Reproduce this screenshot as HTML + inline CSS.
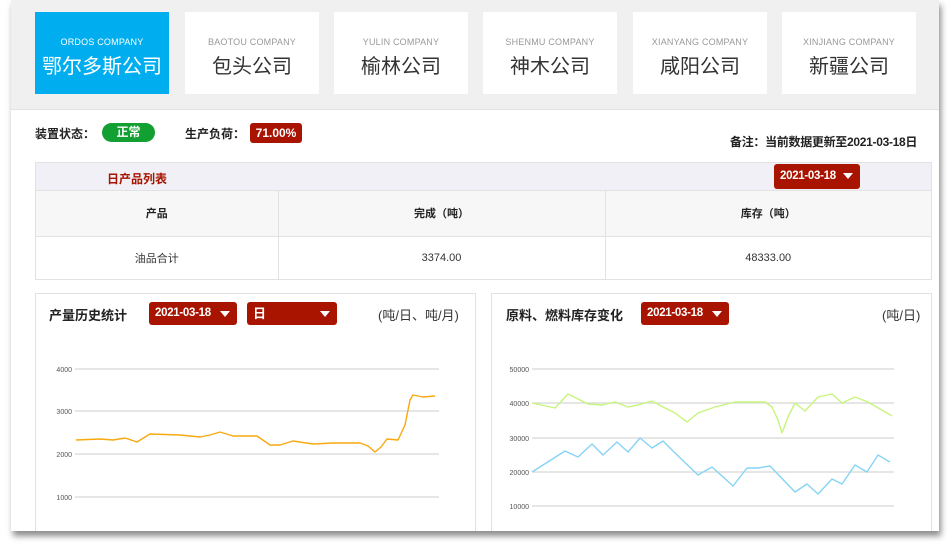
<!DOCTYPE html>
<html><head><meta charset="utf-8"><style>
*{margin:0;padding:0;box-sizing:border-box}
body{width:950px;height:551px;background:#fff;font-family:"Liberation Sans","Noto Sans CJK SC",sans-serif;position:relative;overflow:hidden}
.frame{position:absolute;left:11px;top:0;width:928px;height:531px;background:#fff;box-shadow:2px 5px 6px rgba(0,0,0,.45);overflow:hidden}
.hdr{position:absolute;left:0;top:0;width:928px;height:110px;background:#f0f0f0;border-bottom:1px solid #e2e2e2}
.tab{position:absolute;top:12px;width:134px;height:82px;background:#fff;text-align:center}
.tab .en{font-size:9px;color:#999;margin-top:25px;letter-spacing:.2px}
.tab .cn{font-size:20px;color:#333;margin-top:3px}
.tab.on{background:#00aeef}.tab.on .en,.tab.on .cn{color:#fff}
.abs{position:absolute}
.lbl{font-size:12px;font-weight:bold;color:#222}
.pill{background:#12a032;color:#fff;font-size:12px;font-weight:bold;border-radius:10px;text-align:center}
.red{background:#a81400;color:#fff;font-size:12px;font-weight:bold;border-radius:3px}
.dd{background:#a81400;color:#fff;font-size:11.5px;font-weight:bold;border-radius:3px;padding-left:6px;line-height:23px;height:23px;letter-spacing:-0.3px}
.dd:after{content:"";position:absolute;right:7px;top:9px;border-left:5px solid transparent;border-right:5px solid transparent;border-top:6px solid #fff}
table{border-collapse:collapse}
.panel{position:absolute;top:293px;width:441px;height:250px;border:1px solid #e2e2e2;background:#fff}
</style></head><body>
<div class="frame">
<div class="hdr">
<div class="tab on" style="left:24px"><div class="en">ORDOS COMPANY</div><div class="cn">鄂尔多斯公司</div></div>
<div class="tab" style="left:174px"><div class="en">BAOTOU COMPANY</div><div class="cn">包头公司</div></div>
<div class="tab" style="left:323px"><div class="en">YULIN COMPANY</div><div class="cn">榆林公司</div></div>
<div class="tab" style="left:472px"><div class="en">SHENMU COMPANY</div><div class="cn">神木公司</div></div>
<div class="tab" style="left:622px"><div class="en">XIANYANG COMPANY</div><div class="cn">咸阳公司</div></div>
<div class="tab" style="left:771px"><div class="en">XINJIANG COMPANY</div><div class="cn">新疆公司</div></div>
</div>

<div class="abs lbl" style="left:24px;top:125px">装置状态：</div>
<div class="abs pill" style="left:91px;top:123px;width:53px;height:19px;line-height:19px">正常</div>
<div class="abs lbl" style="left:174px;top:125px">生产负荷：</div>
<div class="abs red" style="left:239px;top:123px;width:52px;height:20px;line-height:20px;text-align:center">71.00%</div>
<div class="abs lbl" style="left:719px;top:133px;letter-spacing:-0.3px">备注：当前数据更新至2021-03-18日</div>

<div class="abs" style="left:24px;top:162px;width:897px;height:118px;border:1px solid #e2e2e2">
<div style="height:28px;background:#f0f0f6;border-bottom:1px solid #e2e2e2;position:relative">
<div class="abs" style="left:71px;top:7px;font-size:12px;font-weight:bold;color:#a81400">日产品列表</div>
<div class="abs dd" style="left:738px;top:1px;width:86px;height:25px;line-height:25px">2021-03-18</div>
</div>
<table style="width:895px;font-size:11px;color:#333;text-align:center">
<tr style="height:45px;background:#f7f7f7;font-weight:bold;color:#222"><td style="width:242px;border-right:1px solid #e2e2e2;border-bottom:1px solid #e2e2e2">产品</td><td style="width:327px;border-right:1px solid #e2e2e2;border-bottom:1px solid #e2e2e2">完成（吨）</td><td style="border-bottom:1px solid #e2e2e2">库存（吨）</td></tr>
<tr style="height:43px"><td style="border-right:1px solid #e2e2e2">油品合计</td><td style="border-right:1px solid #e2e2e2">3374.00</td><td>48333.00</td></tr>
</table>
</div>

<div class="panel" style="left:24px">
<div class="abs" style="left:13px;top:11px;font-size:13px;font-weight:bold;color:#222">产量历史统计</div>
<div class="abs dd" style="left:113px;top:8px;width:88px">2021-03-18</div>
<div class="abs dd" style="left:211px;top:8px;width:90px;font-size:13px">日</div>
<div class="abs" style="left:342px;top:11px;font-size:13px;color:#333">(吨/日、吨/月)</div>
</div>
<div class="panel" style="left:480px">
<div class="abs" style="left:14px;top:11px;font-size:13px;font-weight:bold;color:#222">原料、燃料库存变化</div>
<div class="abs dd" style="left:149px;top:8px;width:88px">2021-03-18</div>
<div class="abs" style="left:390px;top:11px;font-size:13px;color:#333">(吨/日)</div>
</div>

<svg class="abs" style="left:-11px;top:0" width="950" height="531">
<g stroke="#d8d8d8" stroke-width="1.3">
<line x1="75" y1="369" x2="439" y2="369"/><line x1="75" y1="411" x2="439" y2="411"/><line x1="75" y1="454" x2="439" y2="454"/><line x1="75" y1="497" x2="439" y2="497"/>
<line x1="532" y1="369" x2="894" y2="369"/><line x1="532" y1="403" x2="894" y2="403"/><line x1="532" y1="438" x2="894" y2="438"/><line x1="532" y1="472" x2="894" y2="472"/><line x1="532" y1="506" x2="894" y2="506"/>
</g>
<g font-family="Liberation Sans" font-size="7" fill="#555" text-anchor="end">
<text x="72" y="372">4000</text><text x="72" y="414">3000</text><text x="72" y="457">2000</text><text x="72" y="500">1000</text>
<text x="529" y="372">50000</text><text x="529" y="406">40000</text><text x="529" y="441">30000</text><text x="529" y="475">20000</text><text x="529" y="509">10000</text>
</g>
<g fill="none" stroke-width="1.4" stroke-linejoin="round">
<polyline stroke="#f7a90f" points="76,440 100,439 113,440 125,438 137,442 150,434 180,435 200,437 210,435 220,432 233,436 257,436 270,445 280,445 293,441 313,444 333,443 360,443 368,446 375,452 381,447 387,439 398,440 405,425 410,400 413,395 423,397 435,396"/>
<polyline stroke="#c6f57a" points="532,403 555,408 568,394 588,404 602,405 615,402 628,407 638,405 652,401 665,408 675,413 687,422 698,413 715,407 735,402 752,402 765,402 772,407 778,420 782,433 788,417 795,403 805,411 818,397 832,394 842,403 855,397 868,402 892,416"/>
<polyline stroke="#86d4f5" points="532,472 565,451 578,457 592,444 603,455 617,442 628,452 640,438 652,448 663,441 675,453 698,475 712,467 733,486 747,468 758,468 770,466 795,492 807,484 818,494 832,479 842,484 855,465 867,472 878,455 890,462"/>
</g>
</svg>
</div>
</body></html>
